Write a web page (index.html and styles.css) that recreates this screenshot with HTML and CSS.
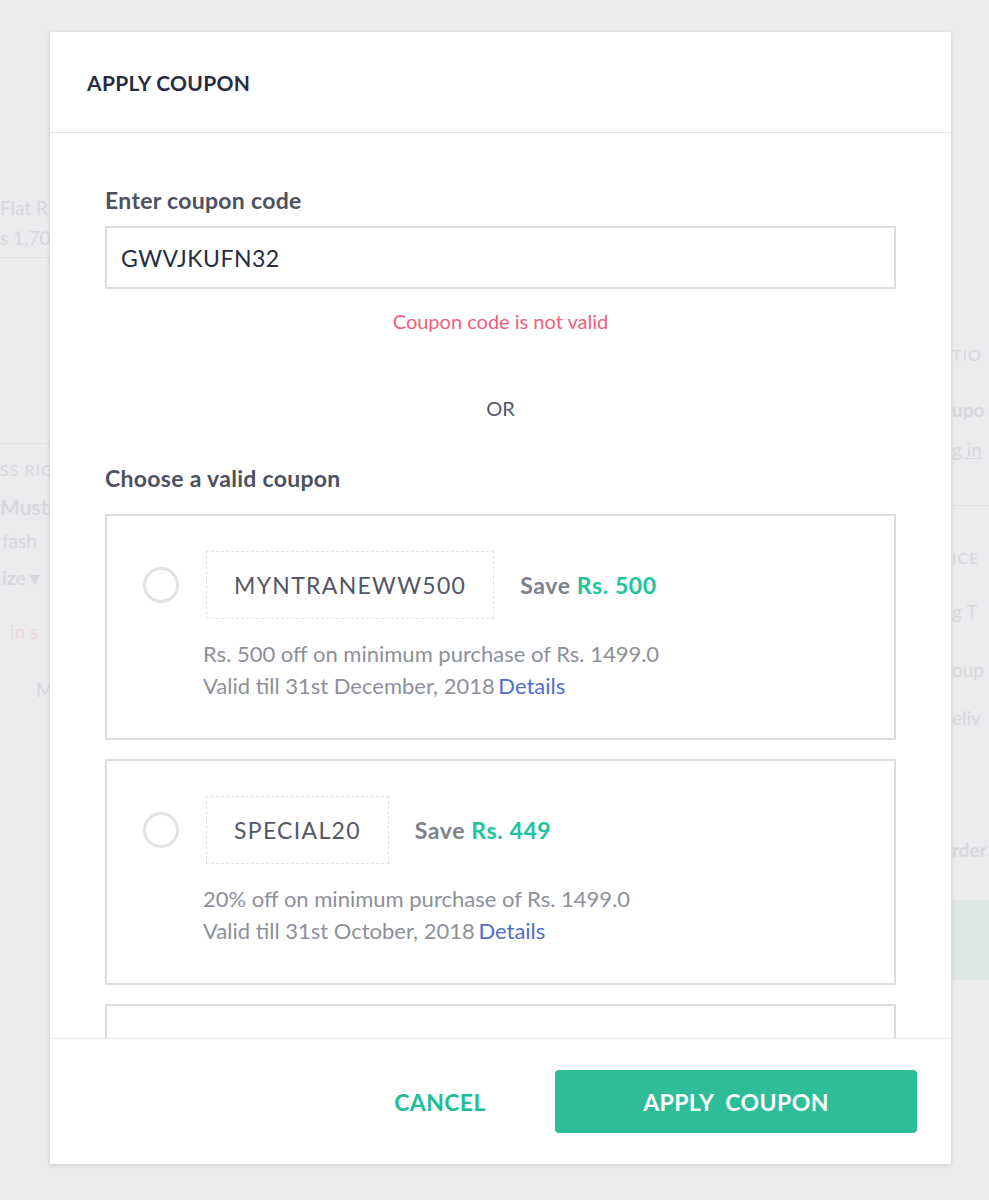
FILE: index.html
```html
<!DOCTYPE html>
<html lang="en">
<head>
  <meta charset="UTF-8">
  <meta name="viewport" content="width=device-width, initial-scale=1.0">
  <title>Apply Coupon</title>
  <link rel="stylesheet" href="styles.css">
</head>
<body>
  <div class="page">
    <div class="bg-left">
      <div class="bg-text">Flat R</div>
      <div class="bg-text">s 1,70</div>
      <div class="bg-line first-line"></div>
      <div class="bg-line second-line"></div>
      <div class="bg-text bg-small">SS RIG</div>
      <div class="bg-text bg-name">Musta</div>
      <div class="bg-text bg-fash">fash</div>
      <div class="bg-text bg-size">ize ▾</div>
      <div class="bg-text bg-stock">in s</div>
      <div class="bg-text bg-move">M</div>
    </div>
    <div class="bg-right">
      <div class="bg-text bg-small">TIO</div>
      <div class="bg-text bg-bold bg-coupons">upo</div>
      <div class="bg-text bg-login"><span class="bg-link">g in</span></div>
      <div class="bg-line right-line"></div>
      <div class="bg-text bg-small bg-price">ICE</div>
      <div class="bg-text bg-bag">g T</div>
      <div class="bg-text bg-coupon">oup</div>
      <div class="bg-text bg-delivery">eliv</div>
      <div class="bg-text bg-bold bg-order">rder</div>
      <div class="bg-block"></div>
    </div>
  </div>

  <div class="modal">
    <div class="modal-header">
      <h2>APPLY COUPON</h2>
    </div>

    <div class="modal-body">
      <label class="field-label" for="couponInput">Enter coupon code</label>
      <input type="text" id="couponInput" class="coupon-input" value="GWVJKUFN32">
      <div class="error">Coupon code is not valid</div>

      <div class="or">OR</div>

      <div class="field-label list-label">Choose a valid coupon</div>

      <div class="coupon-card">
        <div class="radio"></div>
        <div class="coupon-info">
          <div class="coupon-top">
            <div class="coupon-code">MYNTRANEWW500</div>
            <div class="save">Save <span class="amount">Rs. 500</span></div>
          </div>
          <div class="coupon-desc">
            <div>Rs. 500 off on minimum purchase of Rs. 1499.0</div>
            <div>Valid till 31st December, 2018 <a href="#" class="details">Details</a></div>
          </div>
        </div>
      </div>

      <div class="coupon-card">
        <div class="radio"></div>
        <div class="coupon-info">
          <div class="coupon-top">
            <div class="coupon-code">SPECIAL20</div>
            <div class="save">Save <span class="amount">Rs. 449</span></div>
          </div>
          <div class="coupon-desc">
            <div>20% off on minimum purchase of Rs. 1499.0</div>
            <div>Valid till 31st October, 2018 <a href="#" class="details">Details</a></div>
          </div>
        </div>
      </div>

      <!-- next card, scrolled under the footer -->
      <div class="coupon-card"></div>
    </div>

    <div class="modal-footer">
      <button class="btn-cancel">CANCEL</button>
      <button class="btn-apply">APPLY&nbsp; COUPON</button>
    </div>
  </div>
</body>
</html>
```

FILE: styles.css
```css
html, body {
  margin: 0;
  height: 100%;
}
body {
  font-family: Lato, "Open Sans", sans-serif;
  background-color: #ebebed;
  color: #282c3f;
  overflow: hidden;
}

/* faded page behind the modal */
.page {
  display: flex;
  justify-content: space-between;
  height: 1200px;
}
.bg-left {
  width: 50px;
  padding-top: 193px;
}
.bg-right {
  width: 37px;
  padding-top: 340px;
}
.bg-text {
  font-size: 19px;
  line-height: 30px;
  color: #d8d8dc;
  white-space: nowrap;
}
.bg-small {
  font-size: 16px;
  letter-spacing: 1px;
}
.bg-bold {
  font-weight: 700;
}
.bg-line {
  height: 1px;
  background-color: #e2e2e5;
}
.first-line {
  margin-top: 4px;
}
.second-line {
  margin-top: 185px;
}
.bg-left .bg-small {
  margin-top: 11px;
}
.bg-name {
  font-size: 21px;
  font-weight: 700;
  margin-top: 7px;
}
.bg-fash {
  margin-top: 4px;
  padding-left: 2px;
}
.bg-size {
  font-weight: 700;
  margin-top: 7px;
  padding-left: 2px;
}
.bg-stock {
  color: #e8d8dc;
  margin-top: 24px;
  padding-left: 10px;
}
.bg-move {
  margin-top: 28px;
  padding-left: 36px;
}
.bg-coupons {
  margin-top: 25px;
}
.bg-login {
  margin-top: 10px;
}
.bg-link {
  text-decoration: underline;
}
.right-line {
  margin-top: 40px;
}
.bg-price {
  margin-top: 37px;
}
.bg-bag {
  margin-top: 24px;
}
.bg-coupon {
  margin-top: 28px;
}
.bg-delivery {
  margin-top: 18px;
}
.bg-order {
  margin-top: 102px;
}
.bg-block {
  height: 80px;
  margin-top: 35px;
  background-color: #dfe7e6;
}

/* modal overlay */
.modal {
  position: absolute;
  top: 32px;
  left: 50px;
  width: 901px;
  height: 1132px;
  background-color: #fff;
  box-shadow: 0 1px 4px rgba(0, 0, 0, 0.15);
  display: flex;
  flex-direction: column;
}
.modal-header {
  height: 100px;
  flex-shrink: 0;
  display: flex;
  align-items: center;
  padding-left: 37px;
  border-bottom: 1px solid #e4e4e7;
}
.modal-header h2 {
  margin: 0;
  font-size: 21px;
  font-weight: 700;
  color: #282c3f;
  letter-spacing: 0.3px;
}
.modal-body {
  flex: 1;
  min-height: 0;
  overflow: hidden;
  padding: 54px 55px 0;
}
.field-label {
  display: block;
  font-size: 23px;
  line-height: 26px;
  font-weight: 700;
  color: #4d5160;
  letter-spacing: 0.3px;
  margin-bottom: 13px;
}
.list-label {
  margin-bottom: 23px;
}
.coupon-input {
  display: block;
  box-sizing: border-box;
  width: 100%;
  height: 63px;
  border: 2px solid #dcdde0;
  padding: 0 14px;
  font-family: inherit;
  font-size: 23px;
  letter-spacing: 0.5px;
  color: #282c3f;
  outline: none;
}
.error {
  text-align: center;
  font-size: 20px;
  line-height: 24px;
  color: #f0607a;
  margin-top: 20px;
}
.or {
  text-align: center;
  font-size: 20px;
  line-height: 24px;
  color: #535766;
  margin: 63px 0 45px;
}
.coupon-card {
  box-sizing: border-box;
  height: 226px;
  border: 2px solid #dcdde0;
  margin-bottom: 19px;
  padding: 35px 0 0 36px;
  display: flex;
  align-items: flex-start;
  gap: 27px;
}
.radio {
  box-sizing: border-box;
  width: 36px;
  height: 36px;
  margin-top: 16px;
  border: 3px solid #e3e3e6;
  border-radius: 50%;
  flex-shrink: 0;
}
.coupon-top {
  display: flex;
  align-items: center;
  gap: 26px;
}
.coupon-code {
  height: 68px;
  box-sizing: border-box;
  border: 1px dashed #e3e3e6;
  padding: 0 27px;
  display: flex;
  align-items: center;
  font-size: 23px;
  letter-spacing: 1.3px;
  color: #535766;
}
.save {
  font-size: 23px;
  font-weight: 700;
  letter-spacing: 0.6px;
  color: #7e818c;
}
.amount {
  color: #20c39b;
}
.coupon-desc {
  margin: 19px 0 0 -3px;
  font-size: 22px;
  line-height: 32px;
  color: #8e909a;
}
.details {
  color: #526cd0;
  text-decoration: none;
  margin-left: -2px;
}
.modal-footer {
  height: 126px;
  flex-shrink: 0;
  box-sizing: border-box;
  border-top: 1px solid #eeeef0;
  display: flex;
  align-items: center;
  justify-content: flex-end;
  padding-right: 34px;
  background-color: #fff;
}
.btn-cancel, .btn-apply {
  font-family: inherit;
  font-size: 23px;
  font-weight: 700;
  letter-spacing: 0.4px;
  border: none;
  cursor: pointer;
}
.btn-cancel {
  background: none;
  color: #20bd99;
  width: 180px;
  margin-right: 25px;
}
.btn-apply {
  width: 362px;
  height: 63px;
  border-radius: 4px;
  background-color: #2ebd98;
  color: #fff;
}
```
